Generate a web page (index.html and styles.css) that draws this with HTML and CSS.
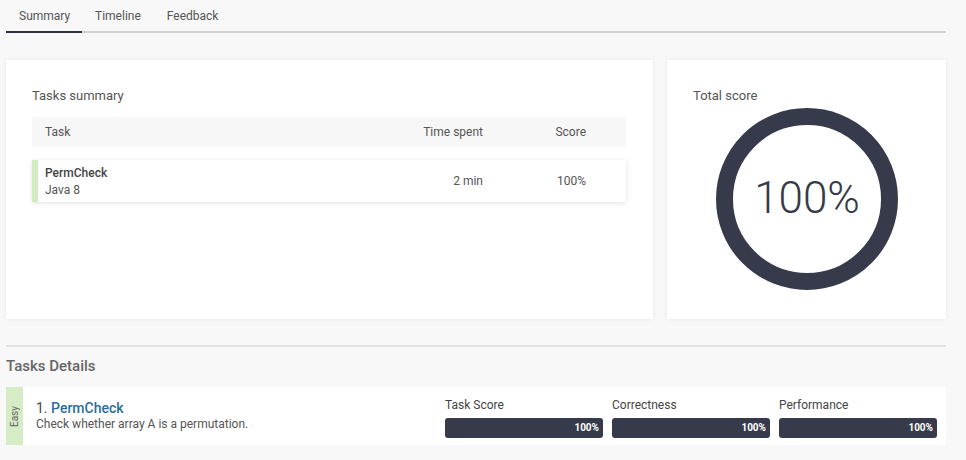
FILE: index.html
```html
<!DOCTYPE html>
<html lang="en">
<head>
    <meta charset="UTF-8">
    <title>Results</title>
    <link rel="stylesheet" href="styles.css">
</head>
<body>
    <div class="page">
        <div class="tabs">
            <div class="tab active">Summary</div>
            <div class="tab">Timeline</div>
            <div class="tab">Feedback</div>
        </div>

        <div class="cards">
            <div class="card summary-card">
                <h3>Tasks summary</h3>
                <div class="table-head">
                    <div class="col-task">Task</div>
                    <div class="col-time">Time spent</div>
                    <div class="col-score">Score</div>
                </div>
                <div class="table-row">
                    <div class="col-task">
                        <div class="task-name">PermCheck</div>
                        <div class="task-lang">Java 8</div>
                    </div>
                    <div class="col-time">2 min</div>
                    <div class="col-score">100%</div>
                </div>
            </div>
            <div class="card score-card">
                <h3>Total score</h3>
                <div class="ring">
                    <svg width="184" height="184" viewBox="0 0 184 184">
                        <circle cx="92" cy="92" r="82.5" fill="none" stroke="#363a4a" stroke-width="17"/>
                    </svg>
                    <span class="ring-label">100%</span>
                </div>
            </div>
        </div>

        <div class="divider"></div>

        <h2 class="details-title">Tasks Details</h2>
        <div class="detail">
            <div class="level"><span>Easy</span></div>
            <div class="detail-info">
                <div class="detail-name">1. <a href="#">PermCheck</a></div>
                <div class="detail-desc">Check whether array A is a permutation.</div>
            </div>
            <div class="metrics">
                <div class="metric">
                    <div class="metric-label">Task Score</div>
                    <div class="bar">100%</div>
                </div>
                <div class="metric">
                    <div class="metric-label">Correctness</div>
                    <div class="bar">100%</div>
                </div>
                <div class="metric">
                    <div class="metric-label">Performance</div>
                    <div class="bar">100%</div>
                </div>
            </div>
        </div>
    </div>
</body>
</html>
```

FILE: styles.css
```css
body {
    margin: 0;
    background: #f8f8f8;
    font-family: Roboto, "Noto Sans", sans-serif;
    color: #444;
}
.page {
    width: 940px;
    padding: 0 6px;
}
.tabs {
    display: flex;
    border-bottom: 2px solid #d2d2d2;
    height: 31px;
}
.tab {
    font-size: 12px;
    color: #555;
    padding: 9px 13px 0;
    margin-bottom: -2px;
}
.tab.active {
    border-bottom: 2px solid #2f3240;
    width: 50px;
}
.cards {
    display: flex;
    gap: 14px;
    margin-top: 27px;
}
.card {
    background: #fff;
    box-shadow: 0 0 4px rgba(0, 0, 0, 0.08);
    height: 259px;
    box-sizing: border-box;
}
.card h3 {
    margin: 0;
    font-size: 13px;
    font-weight: 400;
    color: #555;
}
.summary-card {
    width: 647px;
    padding: 28px 27px 0 26px;
}
.table-head {
    display: flex;
    align-items: center;
    background: #f7f7f7;
    height: 30px;
    margin-top: 14px;
    font-size: 12px;
    color: #555;
}
.col-task {
    flex: 1;
    padding-left: 13px;
}
.col-time {
    width: 106px;
    text-align: right;
}
.col-score {
    width: 143px;
    text-align: right;
    padding-right: 40px;
    box-sizing: border-box;
}
.table-row {
    display: flex;
    align-items: center;
    margin-top: 13px;
    height: 42px;
    background: #fff;
    border-left: 6px solid #d3ebc0;
    box-shadow: 0 1px 5px rgba(0, 0, 0, 0.12);
    font-size: 12px;
    color: #555;
}
.table-row .col-task {
    padding-left: 7px;
}
.table-row .col-score {
    padding-right: 40px;
}
.task-name {
    font-weight: 500;
    color: #444;
}
.task-lang {
    margin-top: 3px;
}
.score-card {
    width: 279px;
    padding: 28px 26px 0 26px;
}
.ring {
    position: relative;
    width: 184px;
    height: 184px;
    margin: 4px 0 0 22px;
}
.ring svg {
    display: block;
}
.ring-label {
    position: absolute;
    left: 0;
    right: 0;
    top: 65px;
    text-align: center;
    font-size: 44px;
    font-weight: 300;
    color: #363a4a;
}
.divider {
    height: 2px;
    background: #e2e2e2;
    margin-top: 26px;
}
.details-title {
    margin: 10px 0 0;
    font-size: 15px;
    font-weight: 500;
    color: #666;
}
.detail {
    display: flex;
    margin-top: 12px;
    height: 58px;
    background: #fff;
}
.level {
    width: 17px;
    background: #d6ecc4;
    display: flex;
    align-items: center;
    justify-content: center;
}
.level span {
    transform: rotate(-90deg);
    font-size: 10px;
    color: #666;
}
.detail-info {
    flex: 1;
    padding: 13px 0 0 13px;
}
.detail-name {
    font-size: 14px;
    color: #444;
}
.detail-name a {
    color: #2c6e9b;
    font-weight: 500;
    text-decoration: none;
}
.detail-desc {
    font-size: 12px;
    color: #555;
    margin-top: 1px;
}
.metrics {
    display: flex;
    gap: 9px;
    padding: 11px 9px 0 0;
}
.metric {
    width: 158px;
}
.metric-label {
    font-size: 12px;
    color: #444;
    height: 20px;
}
.bar {
    height: 20px;
    background: #363a4a;
    border-radius: 3px;
    color: #fff;
    font-size: 10px;
    font-weight: 700;
    text-align: right;
    line-height: 20px;
    padding-right: 4px;
    box-sizing: border-box;
}
```
